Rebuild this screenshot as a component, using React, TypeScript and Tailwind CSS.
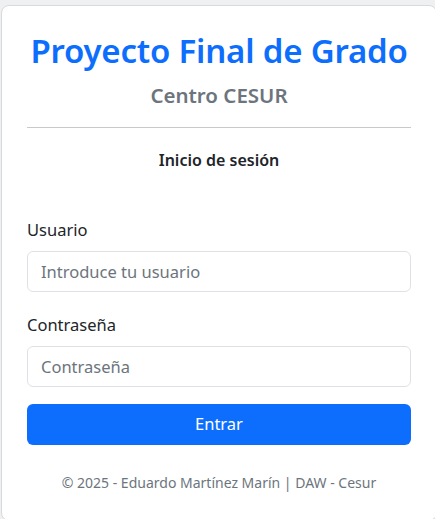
import React from "react";

export default function App() {
  return (
    <div
      className="min-h-screen bg-[#eef0f2] pt-[5px] pl-[1px]"
      style={{ fontFamily: '"Noto Sans", "Open Sans", sans-serif' }}
    >
      <div className="w-[436px] h-[516px] bg-white border border-[#d9dadc] rounded-[8px] px-[25px] pt-[25px] flex flex-col">
        <h1 className="text-center text-[33px] leading-[40px] font-semibold text-[#0d6efd] tracking-[-0.2px]">
          Proyecto Final de Grado
        </h1>
        <h2 className="text-center text-[20.5px] leading-[24px] font-semibold text-[#6c757d] mt-[12px]">
          Centro CESUR
        </h2>
        <hr className="mt-[20px] border-0 border-t border-[#c8c9cb]" />
        <h3 className="text-center text-[16px] leading-[24px] font-semibold text-[#212529] mt-[20px]">
          Inicio de sesión
        </h3>
        <div className="mt-[46px] flex flex-col">
          <label className="text-[16.5px] leading-[24px] text-[#212529]">Usuario</label>
          <input
            className="mt-[9px] h-[41px] w-full border border-[#dee2e6] rounded-[6px] px-[13px] text-[16.5px] text-[#212529] placeholder:text-[#6c757d] outline-none"
            placeholder="Introduce tu usuario"
          />
          <label className="mt-[21px] text-[16.5px] leading-[24px] text-[#212529]">Contraseña</label>
          <input
            type="password"
            className="mt-[9px] h-[41px] w-full border border-[#dee2e6] rounded-[6px] px-[13px] text-[16.5px] text-[#212529] placeholder:text-[#6c757d] outline-none"
            placeholder="Contraseña"
          />
          <button className="mt-[17px] h-[41px] w-full bg-[#0d6efd] rounded-[6px] text-white text-[16.5px]">
            Entrar
          </button>
        </div>
        <p className="text-center text-[14px] leading-[20px] text-[#6c757d] mt-[28px]">
          © 2025 - Eduardo Martínez Marín | DAW - Cesur
        </p>
      </div>
    </div>
  );
}
